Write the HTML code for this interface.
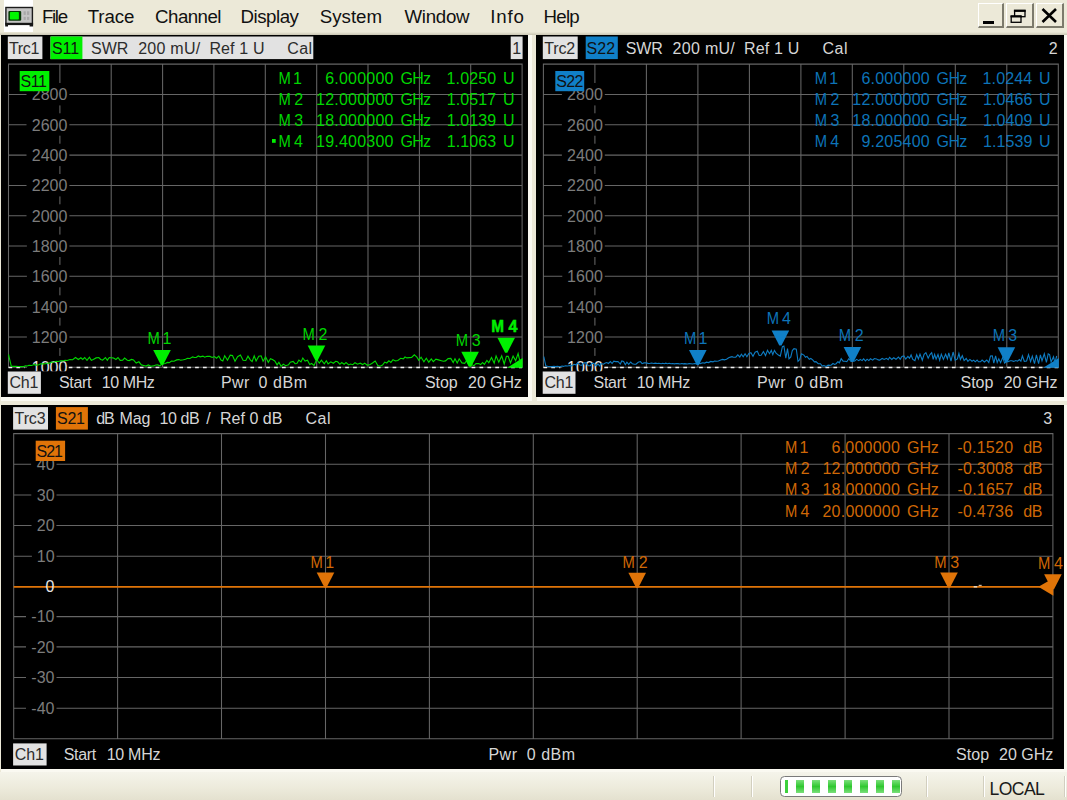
<!DOCTYPE html>
<html><head><meta charset="utf-8"><title>VNA</title>
<style>
html,body{margin:0;padding:0;}
body{width:1067px;height:800px;overflow:hidden;background:#ece9d8;font-family:"Liberation Sans",sans-serif;position:relative;}
.abs{position:absolute;}
.panel{position:absolute;background:#000;overflow:hidden;}
svg{position:absolute;left:0;top:0;}
svg text{font-family:"Liberation Sans",sans-serif;font-size:16px;white-space:pre;}
.btn{position:absolute;top:3px;height:25px;background:#ece9d8;border-top:1px solid #fff;border-left:1px solid #fff;border-right:2px solid #7c7a6c;border-bottom:2px solid #7c7a6c;box-sizing:border-box;}
</style></head><body>

<div class="abs" style="left:0;top:0;width:1067px;height:34px;">
<div class="abs" style="left:4.4px;top:0;width:29px;height:31.5px;background:#fff;"></div>
<div class="abs" style="left:0;top:31.5px;width:1067px;height:3px;background:linear-gradient(#ece9d8,#c9c5b2);"></div>
<svg width="1067" height="34" viewBox="0 0 1067 34">
<rect x="5.9" y="7.5" width="26.5" height="16.2" fill="#c4c4c4" stroke="#1c1c1c" stroke-width="1.4"/>
<rect x="8.4" y="10.9" width="12.8" height="9.8" rx="1.2" fill="#063806"/>
<rect x="9.9" y="12" width="9" height="7.6" rx="0.8" fill="#00f800"/>
<rect x="23.6" y="11.3" width="2.2" height="3.6" fill="#a8a8a8"/><rect x="27" y="11.3" width="2.3" height="3.6" fill="#a8a8a8"/>
<rect x="23.6" y="16.9" width="2.2" height="3" fill="#a8a8a8"/><rect x="27" y="16.9" width="2.3" height="3" fill="#a8a8a8"/>
<rect x="5.2" y="22.8" width="27.9" height="2.3" fill="#161616"/>
<rect x="5.2" y="24.5" width="2.8" height="2" fill="#161616"/><rect x="29.6" y="24.5" width="3.5" height="2" fill="#161616"/>
<text x="41.9" y="22.8" fill="#111" style="font-size:18.7px" letter-spacing="-1.32">File</text>
<text x="87.7" y="22.8" fill="#111" style="font-size:18.7px" letter-spacing="-0.08">Trace</text>
<text x="155.1" y="22.8" fill="#111" style="font-size:18.7px" letter-spacing="-0.55">Channel</text>
<text x="240.5" y="22.8" fill="#111" style="font-size:18.7px" letter-spacing="-0.47">Display</text>
<text x="319.7" y="22.8" fill="#111" style="font-size:18.7px" letter-spacing="0.02">System</text>
<text x="404.5" y="22.8" fill="#111" style="font-size:18.7px" letter-spacing="-0.29">Window</text>
<text x="490.2" y="22.8" fill="#111" style="font-size:18.7px" letter-spacing="0.83">Info</text>
<text x="543.4" y="22.8" fill="#111" style="font-size:18.7px" letter-spacing="-0.69">Help</text>
</svg>
<div class="btn" style="left:978px;width:26px;"><div class="abs" style="left:4px;top:17px;width:11px;height:3px;background:#000"></div></div>
<div class="btn" style="left:1005.5px;width:28px;"><svg width="28" height="25"><rect x="7.6" y="6.9" width="10.4" height="5.8" fill="none" stroke="#000" stroke-width="1.3"/><rect x="6.9" y="5.6" width="11.8" height="2.2" fill="#000"/><rect x="4.2" y="12.5" width="9.8" height="5.8" fill="#ece9d8" stroke="#000" stroke-width="1.3"/><rect x="3.5" y="11.2" width="11.2" height="2.2" fill="#000"/></svg></div>
<div class="btn" style="left:1036px;width:27.5px;"><svg width="28" height="25"><path d="M5.5 5 L19 18 M19 5 L5.5 18" stroke="#000" stroke-width="2.6" fill="none"/></svg></div>
</div>
<div class="panel" style="left:1px;top:35px;width:527px;height:362px;">
<svg width="527" height="362" viewBox="1.3 34.5 527 362">
<path d="M8.8 63.1V367.3M60.2 63.1V367.3M111.5 63.1V367.3M162.9 63.1V367.3M214.2 63.1V367.3M265.6 63.1V367.3M317.0 63.1V367.3M368.3 63.1V367.3M419.7 63.1V367.3M471.0 63.1V367.3M522.4 63.1V367.3M8.3 63.6H522.9M8.3 93.9H522.9M8.3 124.2H522.9M8.3 154.6H522.9M8.3 184.9H522.9M8.3 215.2H522.9M8.3 245.5H522.9M8.3 275.8H522.9M8.3 306.2H522.9M8.3 336.5H522.9M8.3 366.8H522.9" stroke="#666666" stroke-width="1.05" fill="none"/>
<svg x="8.8" y="63.6" width="513.6" height="307.2" viewBox="8.8 63.6 513.6 307.2" overflow="hidden">
<rect x="26.8" y="82.5" width="42.9" height="22.4" fill="#000"/>
<text x="32.0" y="99.7" fill="#7c7c7c" letter-spacing="0.05">2800</text>
<rect x="26.8" y="112.8" width="42.9" height="22.4" fill="#000"/>
<text x="32.0" y="130.0" fill="#7c7c7c" letter-spacing="0.05">2600</text>
<rect x="26.8" y="143.2" width="42.9" height="22.4" fill="#000"/>
<text x="32.0" y="160.4" fill="#7c7c7c" letter-spacing="0.05">2400</text>
<rect x="26.8" y="173.5" width="42.9" height="22.4" fill="#000"/>
<text x="32.0" y="190.7" fill="#7c7c7c" letter-spacing="0.05">2200</text>
<rect x="26.8" y="203.8" width="42.9" height="22.4" fill="#000"/>
<text x="32.0" y="221.0" fill="#7c7c7c" letter-spacing="0.05">2000</text>
<rect x="27.2" y="234.1" width="42.5" height="22.4" fill="#000"/>
<text x="32.0" y="251.3" fill="#7c7c7c" letter-spacing="0.05">1800</text>
<rect x="27.2" y="264.4" width="42.5" height="22.4" fill="#000"/>
<text x="32.0" y="281.6" fill="#7c7c7c" letter-spacing="0.05">1600</text>
<rect x="27.2" y="294.8" width="42.5" height="22.4" fill="#000"/>
<text x="32.0" y="312.0" fill="#7c7c7c" letter-spacing="0.05">1400</text>
<rect x="27.2" y="325.1" width="42.5" height="22.4" fill="#000"/>
<text x="32.0" y="342.3" fill="#7c7c7c" letter-spacing="0.05">1200</text>
<rect x="27.2" y="355.4" width="42.5" height="22.4" fill="#000"/>
<text x="32.0" y="372.6" fill="#e2e2e2" letter-spacing="0.05">1000</text>
</svg>
<line x1="69" y1="367" x2="522.4" y2="367" stroke="#f0f0f0" stroke-width="1.5" stroke-dasharray="3.7,4.2"/>
<line x1="8.8" y1="367" x2="25" y2="367" stroke="#f0f0f0" stroke-width="1.5" stroke-dasharray="3.7,4.2"/>
<polygon points="522.9,367.3 522.9,357.6 507.4,367.3" fill="#00f000"/>
<rect x="8.1" y="36.0" width="34.6" height="22.6" fill="#e2e2e2"/>
<text x="9.3" y="53.0" fill="#2c2c2c" letter-spacing="-0.37">Trc1</text>
<rect x="50.8" y="36.0" width="262.8" height="22.6" fill="#e2e2e2"/>
<rect x="50.8" y="36.0" width="31.9" height="22.6" fill="#00f000"/>
<text x="52.2" y="53.0" fill="#111" letter-spacing="-0.02">S11</text>
<text x="91.4" y="53.0" fill="#2c2c2c" letter-spacing="-0.11">SWR</text>
<text x="138.5" y="53.0" fill="#2c2c2c" letter-spacing="0.25">200 mU/</text>
<text x="209.7" y="53.0" fill="#2c2c2c" letter-spacing="0.14">Ref 1 U</text>
<text x="287.5" y="53.0" fill="#2c2c2c" letter-spacing="0.38">Cal</text>
<rect x="511.0" y="36.0" width="11.9" height="22.6" fill="#e2e2e2"/>
<text x="512.6" y="53.0" fill="#2c2c2c">1</text>
<rect x="20.0" y="70.5" width="29.6" height="20.2" fill="#00f000"/>
<text x="20.7" y="86.6" fill="#111" letter-spacing="-0.37">S11</text>
<text x="278.9" y="83.0" fill="#00d600" textLength="12.3" lengthAdjust="spacingAndGlyphs">M</text>
<text x="293.3" y="83.0" fill="#00d600">1</text>
<text x="325.5" y="83.0" fill="#00d600" letter-spacing="0.22">6.000000</text>
<text x="400.7" y="83.0" fill="#00d600" letter-spacing="-0.64">GHz</text>
<text x="446.9" y="83.0" fill="#00d600" letter-spacing="0.10">1.0250</text>
<text x="503.2" y="83.0" fill="#00d600">U</text>
<text x="278.9" y="104.1" fill="#00d600" textLength="12.3" lengthAdjust="spacingAndGlyphs">M</text>
<text x="294.6" y="104.1" fill="#00d600">2</text>
<text x="316.4" y="104.1" fill="#00d600" letter-spacing="0.22">12.000000</text>
<text x="400.7" y="104.1" fill="#00d600" letter-spacing="-0.64">GHz</text>
<text x="447.1" y="104.1" fill="#00d600" letter-spacing="0.10">1.0517</text>
<text x="503.2" y="104.1" fill="#00d600">U</text>
<text x="278.9" y="125.2" fill="#00d600" textLength="12.3" lengthAdjust="spacingAndGlyphs">M</text>
<text x="294.6" y="125.2" fill="#00d600">3</text>
<text x="316.4" y="125.2" fill="#00d600" letter-spacing="0.22">18.000000</text>
<text x="400.7" y="125.2" fill="#00d600" letter-spacing="-0.64">GHz</text>
<text x="447.1" y="125.2" fill="#00d600" letter-spacing="0.10">1.0139</text>
<text x="503.2" y="125.2" fill="#00d600">U</text>
<text x="278.9" y="146.3" fill="#00d600" textLength="12.3" lengthAdjust="spacingAndGlyphs">M</text>
<text x="294.3" y="146.3" fill="#00d600">4</text>
<text x="316.4" y="146.3" fill="#00d600" letter-spacing="0.22">19.400300</text>
<text x="400.7" y="146.3" fill="#00d600" letter-spacing="-0.64">GHz</text>
<text x="447.0" y="146.3" fill="#00d600" letter-spacing="0.10">1.1063</text>
<text x="503.2" y="146.3" fill="#00d600">U</text>
<rect x="272.3" y="138.5" width="3.7" height="3.8" fill="#00f000"/>
<polyline points="8.8,354.0 11.6,365.8 14.0,365.9 16.4,365.8 18.5,366.0 21.0,366.1 23.9,366.0 25.8,365.4 27.6,365.5 29.3,364.8 32.0,365.0 34.3,364.1 36.4,364.6 39.1,364.2 41.0,363.2 43.7,363.4 45.8,363.2 47.5,362.7 49.8,362.6 51.6,361.5 53.7,361.7 56.5,360.8 58.5,361.0 61.1,360.3 63.4,360.4 65.3,359.8 67.5,360.0 70.3,359.1 73.0,359.2 75.8,357.0 78.6,359.0 81.2,357.3 83.0,358.9 85.0,357.0 87.3,359.8 89.7,356.7 91.6,359.8 93.6,359.0 96.4,357.4 99.1,357.0 101.0,358.9 103.0,359.6 105.7,357.0 107.6,359.7 109.6,357.0 112.0,357.3 114.0,357.6 116.2,359.0 118.3,357.0 120.5,359.9 123.0,359.7 124.9,357.6 127.6,359.7 129.4,360.1 131.9,358.9 133.8,359.4 136.5,362.6 139.2,361.3 141.7,364.4 143.9,365.0 146.3,365.6 148.6,364.4 151.1,365.8 153.7,365.4 156.1,364.5 157.9,364.4 160.3,365.3 162.8,363.4 165.6,363.0 167.7,361.9 169.6,362.1 171.8,360.6 174.3,360.7 177.0,359.4 179.1,359.1 181.0,359.7 183.7,359.3 185.8,358.7 187.8,357.7 190.3,358.0 192.9,356.4 194.8,357.0 196.5,357.0 198.6,355.5 200.5,356.3 203.2,355.6 205.0,356.7 207.4,355.7 210.2,355.9 212.5,357.0 214.8,356.1 216.8,357.7 219.1,355.6 221.3,359.6 223.1,360.5 225.0,355.3 227.8,359.7 230.5,354.7 232.8,355.1 235.3,360.8 237.9,356.2 240.7,354.6 243.4,359.8 246.1,360.0 248.3,355.7 250.6,359.4 252.4,361.1 254.5,355.4 256.4,360.5 259.1,355.8 261.4,355.3 263.4,360.7 265.9,356.5 268.6,361.8 270.8,358.2 272.7,359.1 275.1,360.5 277.4,364.4 279.2,361.8 281.4,365.8 283.6,363.6 286.0,365.2 288.8,364.3 290.6,361.7 293.4,360.9 295.4,363.2 297.2,363.0 299.2,359.5 301.3,361.4 303.1,357.5 305.4,360.6 307.8,359.7 310.0,364.0 311.9,363.0 314.3,364.9 317.0,359.0 319.6,362.6 321.7,359.7 324.6,363.3 326.6,360.3 328.4,363.4 331.1,361.3 333.6,362.8 336.1,360.8 337.9,361.3 340.2,363.8 342.0,362.0 344.4,363.8 346.3,362.1 349.0,364.4 350.8,363.5 353.1,364.2 355.3,362.2 357.8,363.7 360.5,362.7 363.0,364.1 364.9,362.6 367.7,364.8 370.4,363.9 372.8,362.5 375.5,360.5 378.1,365.0 380.3,365.7 382.8,364.5 385.0,361.6 387.1,362.5 389.2,360.3 391.2,361.9 393.3,359.2 395.7,360.4 398.1,360.0 401.0,357.8 403.6,358.3 405.3,356.5 407.2,357.4 409.5,357.1 411.9,357.0 414.6,354.3 417.2,356.6 419.1,359.8 421.4,356.7 424.2,361.2 426.6,357.7 429.1,361.7 431.6,358.4 433.6,361.1 436.2,358.6 438.8,359.4 441.6,360.2 443.8,360.8 445.8,360.4 448.4,358.1 451.1,357.9 453.5,362.1 455.3,358.2 457.5,362.5 459.5,358.3 462.2,362.4 465.0,362.8 466.8,360.2 469.3,365.0 471.8,364.1 474.3,365.2 476.3,363.0 479.0,363.1 481.0,364.1 482.9,362.0 484.7,363.8 487.2,360.0 489.1,362.2 491.8,356.9 494.5,362.7 496.4,355.4 499.1,361.7 502.0,355.4 504.5,363.5 506.7,355.9 508.5,355.9 510.8,362.5 513.4,355.6 515.9,360.1 518.4,353.0 520.3,361.1" fill="none" stroke="#00d800" stroke-width="1.1" stroke-linejoin="miter"/>
<polygon points="153.5,349.6 171.1,349.6 163.4,364.6 161.2,364.6" fill="#00f000"/>
<text x="147.7" y="343.0" fill="#00d600" textLength="12.3" lengthAdjust="spacingAndGlyphs">M</text>
<text x="162.8" y="343.0" fill="#00d600">1</text>
<!-- M 1 -->
<polygon points="308.0,345.0 325.6,345.0 317.9,360.0 315.7,360.0" fill="#00f000"/>
<text x="302.8" y="339.7" fill="#00d600" textLength="12.3" lengthAdjust="spacingAndGlyphs">M</text>
<text x="318.8" y="339.7" fill="#00d600">2</text>
<!-- M 2 -->
<polygon points="461.6,351.3 479.2,351.3 471.5,366.3 469.3,366.3" fill="#00f000"/>
<text x="456.0" y="345.0" fill="#00d600" textLength="12.3" lengthAdjust="spacingAndGlyphs">M</text>
<text x="472.0" y="345.0" fill="#00d600">3</text>
<!-- M 3 -->
<polygon points="497.7,337.2 515.3,337.2 507.6,352.2 505.4,352.2" fill="#00f000"/>
<text x="491.6" y="331.8" fill="#00f000" font-weight="bold" stroke="#00f000" stroke-width="0.5" textLength="12.7" lengthAdjust="spacingAndGlyphs">M</text>
<text x="508.9" y="331.8" fill="#00f000" font-weight="bold" stroke="#00f000" stroke-width="0.5">4</text>
<!-- M 4 -->
<rect x="8.1" y="371.0" width="33.1" height="22.3" fill="#e2e2e2"/>
<text x="9.8" y="387.6" fill="#2c2c2c" letter-spacing="-0.22">Ch1</text>
<text x="59.3" y="387.6" fill="#d6d6d6" letter-spacing="-0.36">Start</text>
<text x="102.0" y="387.6" fill="#d6d6d6" letter-spacing="-0.40">10 MHz</text>
<text x="221.2" y="387.6" fill="#d6d6d6" letter-spacing="0.46">Pwr</text>
<text x="258.9" y="387.6" fill="#d6d6d6" letter-spacing="0.56">0 dBm</text>
<text x="425.3" y="387.6" fill="#d6d6d6" letter-spacing="-0.07">Stop</text>
<text x="468.4" y="387.6" fill="#d6d6d6" letter-spacing="-0.10">20 GHz</text>
</svg></div>
<div class="panel" style="left:536px;top:35px;width:528px;height:362px;">
<svg width="528" height="362" viewBox="536.1 34.5 528 362">
<path d="M543.5 63.1V367.3M595.0 63.1V367.3M646.5 63.1V367.3M698.0 63.1V367.3M749.5 63.1V367.3M801.0 63.1V367.3M852.4 63.1V367.3M903.9 63.1V367.3M955.4 63.1V367.3M1006.9 63.1V367.3M1058.4 63.1V367.3M543.0 63.6H1058.9M543.0 93.9H1058.9M543.0 124.2H1058.9M543.0 154.6H1058.9M543.0 184.9H1058.9M543.0 215.2H1058.9M543.0 245.5H1058.9M543.0 275.8H1058.9M543.0 306.2H1058.9M543.0 336.5H1058.9M543.0 366.8H1058.9" stroke="#666666" stroke-width="1.05" fill="none"/>
<svg x="543.5" y="63.6" width="514.9" height="307.2" viewBox="543.5 63.6 514.9 307.2" overflow="hidden">
<rect x="562.0" y="82.5" width="42.9" height="22.4" fill="#000"/>
<text x="567.2" y="99.7" fill="#7c7c7c" letter-spacing="0.05">2800</text>
<rect x="562.0" y="112.8" width="42.9" height="22.4" fill="#000"/>
<text x="567.2" y="130.0" fill="#7c7c7c" letter-spacing="0.05">2600</text>
<rect x="562.0" y="143.2" width="42.9" height="22.4" fill="#000"/>
<text x="567.2" y="160.4" fill="#7c7c7c" letter-spacing="0.05">2400</text>
<rect x="562.0" y="173.5" width="42.9" height="22.4" fill="#000"/>
<text x="567.2" y="190.7" fill="#7c7c7c" letter-spacing="0.05">2200</text>
<rect x="562.0" y="203.8" width="42.9" height="22.4" fill="#000"/>
<text x="567.2" y="221.0" fill="#7c7c7c" letter-spacing="0.05">2000</text>
<rect x="562.4" y="234.1" width="42.5" height="22.4" fill="#000"/>
<text x="567.2" y="251.3" fill="#7c7c7c" letter-spacing="0.05">1800</text>
<rect x="562.4" y="264.4" width="42.5" height="22.4" fill="#000"/>
<text x="567.2" y="281.6" fill="#7c7c7c" letter-spacing="0.05">1600</text>
<rect x="562.4" y="294.8" width="42.5" height="22.4" fill="#000"/>
<text x="567.2" y="312.0" fill="#7c7c7c" letter-spacing="0.05">1400</text>
<rect x="562.4" y="325.1" width="42.5" height="22.4" fill="#000"/>
<text x="567.2" y="342.3" fill="#7c7c7c" letter-spacing="0.05">1200</text>
<rect x="562.4" y="355.4" width="42.5" height="22.4" fill="#000"/>
<text x="567.2" y="372.6" fill="#e2e2e2" letter-spacing="0.05">1000</text>
</svg>
<line x1="604.4" y1="367" x2="1058.4" y2="367" stroke="#f0f0f0" stroke-width="1.5" stroke-dasharray="3.7,4.2"/>
<line x1="543.5" y1="367" x2="560.4" y2="367" stroke="#f0f0f0" stroke-width="1.5" stroke-dasharray="3.7,4.2"/>
<polygon points="1058.9,367.3 1058.9,357.6 1043.4,367.3" fill="#1080c8"/>
<rect x="542.9" y="36.0" width="34.9" height="22.6" fill="#e2e2e2"/>
<text x="544.3" y="53.0" fill="#2c2c2c" letter-spacing="-0.14">Trc2</text>
<rect x="585.8" y="36.0" width="32.1" height="22.6" fill="#1080c8"/>
<text x="586.7" y="53.0" fill="#111" letter-spacing="0.03">S22</text>
<text x="625.9" y="53.0" fill="#d6d6d6" letter-spacing="-0.11">SWR</text>
<text x="672.7" y="53.0" fill="#d6d6d6" letter-spacing="0.29">200 mU/</text>
<text x="744.1" y="53.0" fill="#d6d6d6" letter-spacing="0.17">Ref 1 U</text>
<text x="822.6" y="53.0" fill="#d6d6d6" letter-spacing="0.48">Cal</text>
<text x="1048.9" y="53.0" fill="#d6d6d6">2</text>
<rect x="555.4" y="70.5" width="28.9" height="20.2" fill="#1080c8"/>
<text x="556.3" y="86.6" fill="#111" letter-spacing="-0.67">S22</text>
<text x="814.9" y="83.0" fill="#0d74b8" textLength="12.3" lengthAdjust="spacingAndGlyphs">M</text>
<text x="829.3" y="83.0" fill="#0d74b8">1</text>
<text x="861.5" y="83.0" fill="#0d74b8" letter-spacing="0.22">6.000000</text>
<text x="936.7" y="83.0" fill="#0d74b8" letter-spacing="-0.64">GHz</text>
<text x="982.7" y="83.0" fill="#0d74b8" letter-spacing="0.10">1.0244</text>
<text x="1039.2" y="83.0" fill="#0d74b8">U</text>
<text x="814.9" y="104.1" fill="#0d74b8" textLength="12.3" lengthAdjust="spacingAndGlyphs">M</text>
<text x="830.6" y="104.1" fill="#0d74b8">2</text>
<text x="852.4" y="104.1" fill="#0d74b8" letter-spacing="0.22">12.000000</text>
<text x="936.7" y="104.1" fill="#0d74b8" letter-spacing="-0.64">GHz</text>
<text x="983.0" y="104.1" fill="#0d74b8" letter-spacing="0.10">1.0466</text>
<text x="1039.2" y="104.1" fill="#0d74b8">U</text>
<text x="814.9" y="125.2" fill="#0d74b8" textLength="12.3" lengthAdjust="spacingAndGlyphs">M</text>
<text x="830.6" y="125.2" fill="#0d74b8">3</text>
<text x="852.4" y="125.2" fill="#0d74b8" letter-spacing="0.22">18.000000</text>
<text x="936.7" y="125.2" fill="#0d74b8" letter-spacing="-0.64">GHz</text>
<text x="983.1" y="125.2" fill="#0d74b8" letter-spacing="0.10">1.0409</text>
<text x="1039.2" y="125.2" fill="#0d74b8">U</text>
<text x="814.9" y="146.3" fill="#0d74b8" textLength="12.3" lengthAdjust="spacingAndGlyphs">M</text>
<text x="830.3" y="146.3" fill="#0d74b8">4</text>
<text x="861.5" y="146.3" fill="#0d74b8" letter-spacing="0.22">9.205400</text>
<text x="936.7" y="146.3" fill="#0d74b8" letter-spacing="-0.64">GHz</text>
<text x="983.1" y="146.3" fill="#0d74b8" letter-spacing="0.10">1.1539</text>
<text x="1039.2" y="146.3" fill="#0d74b8">U</text>
<polyline points="543.9,356.0 545.9,365.4 548.2,366.0 549.9,366.0 552.2,366.1 554.0,365.9 555.8,366.1 557.7,365.8 559.9,366.2 562.1,365.5 563.5,365.9 565.5,365.2 567.7,365.5 569.9,365.0 572.0,365.4 574.0,363.8 576.0,364.3 578.2,362.5 580.0,364.5 582.1,364.7 584.2,362.4 586.0,362.4 588.2,365.1 590.5,365.2 592.4,362.7 594.2,363.0 596.4,365.3 598.0,363.3 599.7,365.4 601.4,363.2 603.5,363.7 605.4,362.5 606.9,362.0 608.5,363.0 610.5,361.1 612.2,363.0 613.9,360.7 615.8,361.1 618.1,361.0 620.4,363.5 621.9,360.4 623.7,360.9 625.4,364.2 627.0,361.6 628.8,363.9 630.8,361.5 632.5,363.3 634.4,363.8 636.1,363.7 638.3,361.8 640.5,361.1 642.2,363.2 644.1,362.4 646.0,362.4 648.2,362.9 649.7,363.0 651.7,362.5 653.9,363.0 655.4,362.6 657.5,363.0 659.0,362.7 661.3,363.2 662.8,362.8 664.4,363.2 665.9,362.7 667.5,363.2 669.3,362.8 671.0,363.3 672.7,363.0 674.4,363.4 676.5,363.0 678.1,363.1 680.1,363.5 681.9,363.0 683.4,363.4 685.0,363.1 687.3,363.5 689.3,363.1 691.1,363.2 692.6,363.5 694.9,363.0 696.9,363.4 698.7,362.8 700.4,363.1 702.7,362.2 704.8,362.6 706.6,361.7 708.7,362.1 710.8,360.9 713.1,361.4 714.6,360.5 716.7,360.8 718.5,360.5 720.8,359.6 722.7,358.9 724.4,359.4 726.6,358.8 728.8,357.3 730.5,356.6 732.1,356.2 733.5,356.8 735.9,356.6 737.9,354.4 739.9,356.5 741.5,353.7 743.3,356.3 745.2,353.2 747.0,356.2 749.0,353.0 751.0,352.2 753.1,355.8 755.2,351.7 757.4,350.8 759.3,355.0 761.2,354.8 763.5,351.1 765.6,355.1 767.6,349.8 769.6,353.2 771.4,349.9 772.9,354.1 774.5,349.9 776.2,352.6 778.5,354.6 780.4,355.6 782.5,346.2 784.0,345.5 785.9,357.7 787.6,348.1 789.1,358.3 790.9,356.4 792.4,350.1 794.1,348.2 796.4,348.7 798.1,360.9 799.7,359.3 801.6,353.2 804.0,354.6 805.6,356.8 807.1,355.9 809.4,358.8 810.9,358.0 812.8,359.4 814.5,361.4 816.1,361.1 818.3,363.2 820.6,363.2 822.3,365.5 824.0,365.0 826.3,366.0 828.2,364.6 829.9,364.9 831.4,364.5 833.1,363.0 834.7,363.9 836.2,363.2 838.0,361.2 839.5,362.3 841.3,358.2 843.2,360.7 845.3,360.7 846.9,361.2 848.9,358.1 851.1,361.0 852.7,359.3 854.7,360.6 856.7,358.9 858.9,360.2 860.4,358.9 862.2,360.1 863.7,358.4 865.6,360.4 867.2,358.7 868.9,360.1 870.6,358.3 872.8,359.6 874.4,358.0 876.6,358.4 878.3,359.4 879.8,359.6 882.2,358.0 884.3,359.0 886.6,357.8 888.3,359.2 889.7,356.8 891.9,358.9 893.8,357.3 896.1,358.8 898.5,356.5 900.3,358.7 902.0,356.0 904.0,355.5 905.8,358.5 908.0,355.8 909.6,357.8 911.2,354.5 912.9,358.9 915.0,360.1 916.8,354.2 918.5,358.4 920.1,353.6 922.4,359.7 924.2,353.9 926.0,352.1 928.3,357.7 930.1,354.1 931.8,352.1 933.3,358.8 934.7,353.9 936.2,358.6 938.1,354.0 939.8,359.8 941.4,353.7 943.5,358.9 945.7,353.7 947.5,358.3 948.9,352.4 951.1,360.7 953.2,351.5 955.3,359.7 957.5,358.4 959.0,353.0 960.5,359.0 962.4,355.2 964.2,360.1 966.3,358.0 968.0,360.9 970.0,358.9 972.1,360.7 973.8,359.6 975.3,361.3 977.2,359.5 978.6,361.3 980.6,361.3 982.2,359.6 984.5,361.5 986.9,359.5 988.9,362.0 990.6,355.5 992.4,355.4 993.9,362.7 995.7,355.3 997.3,362.0 998.9,358.3 1000.7,362.2 1002.8,356.8 1004.7,362.7 1006.5,361.3 1008.2,361.3 1010.3,360.3 1011.8,360.3 1013.8,360.9 1015.9,360.1 1017.6,360.7 1019.5,359.1 1021.0,360.6 1022.5,355.3 1024.4,360.8 1026.7,360.5 1028.6,354.1 1030.7,361.1 1032.4,355.6 1034.6,363.1 1036.5,354.3 1038.7,363.1 1040.5,354.4 1042.1,360.4 1044.4,353.3 1046.5,361.8 1048.3,353.4 1049.7,354.1 1051.2,361.4 1053.6,356.2 1055.0,362.3 1056.8,355.5" fill="none" stroke="#0e7cc2" stroke-width="1.1" stroke-linejoin="miter"/>
<polygon points="689.1,349.6 706.7,349.6 699.0,364.6 696.8,364.6" fill="#1080c8"/>
<text x="684.2" y="343.0" fill="#0d74b8" textLength="12.3" lengthAdjust="spacingAndGlyphs">M</text>
<text x="698.7" y="343.0" fill="#0d74b8">1</text>
<!-- M 1 -->
<polygon points="771.7,330.0 789.3,330.0 781.6,345.0 779.4,345.0" fill="#1080c8"/>
<text x="766.8" y="323.0" fill="#0d74b8" textLength="12.3" lengthAdjust="spacingAndGlyphs">M</text>
<text x="782.0" y="323.0" fill="#0d74b8">4</text>
<!-- M 4 -->
<polygon points="843.7,346.6 861.3,346.6 853.6,361.6 851.4,361.6" fill="#1080c8"/>
<text x="838.8" y="340.8" fill="#0d74b8" textLength="12.3" lengthAdjust="spacingAndGlyphs">M</text>
<text x="854.8" y="340.8" fill="#0d74b8">2</text>
<!-- M 2 -->
<polygon points="997.7,346.8 1015.3,346.8 1007.6,361.8 1005.4,361.8" fill="#1080c8"/>
<text x="992.8" y="340.8" fill="#0d74b8" textLength="12.3" lengthAdjust="spacingAndGlyphs">M</text>
<text x="1008.3" y="340.8" fill="#0d74b8">3</text>
<!-- M 3 -->
<rect x="542.8" y="371.0" width="32.8" height="22.3" fill="#e2e2e2"/>
<text x="544.5" y="387.6" fill="#2c2c2c" letter-spacing="-0.22">Ch1</text>
<text x="593.6" y="387.6" fill="#d6d6d6" letter-spacing="-0.28">Start</text>
<text x="636.8" y="387.6" fill="#d6d6d6" letter-spacing="-0.32">10 MHz</text>
<text x="757.2" y="387.6" fill="#d6d6d6" letter-spacing="0.46">Pwr</text>
<text x="794.9" y="387.6" fill="#d6d6d6" letter-spacing="0.54">0 dBm</text>
<text x="960.7" y="387.6" fill="#d6d6d6" letter-spacing="-0.07">Stop</text>
<text x="1003.8" y="387.6" fill="#d6d6d6" letter-spacing="-0.10">20 GHz</text>
</svg></div>
<div class="panel" style="left:1px;top:405px;width:1063px;height:364px;">
<svg width="1063" height="364" viewBox="1.3 405.4 1063 364">
<path d="M14.0 433.5V739.7M117.9 433.5V739.7M221.8 433.5V739.7M325.8 433.5V739.7M429.7 433.5V739.7M533.6 433.5V739.7M637.5 433.5V739.7M741.4 433.5V739.7M845.4 433.5V739.7M949.3 433.5V739.7M1053.2 433.5V739.7M13.5 434.0H1053.7M13.5 464.6H1053.7M13.5 495.3H1053.7M13.5 525.9H1053.7M13.5 556.6H1053.7M13.5 617.0H1053.7M13.5 647.3H1053.7M13.5 677.9H1053.7M13.5 708.6H1053.7M13.5 739.2H1053.7" stroke="#666666" stroke-width="1.05" fill="none"/>
<svg x="14" y="434" width="1039.2" height="305.8" viewBox="14 434 1039.2 305.8" overflow="hidden">
<rect x="31.4" y="453.2" width="25.4" height="22.4" fill="#000"/>
<text x="37.0" y="470.4" fill="#7c7c7c" letter-spacing="0.05">40</text>
<rect x="31.6" y="483.9" width="25.2" height="22.4" fill="#000"/>
<text x="37.0" y="501.1" fill="#7c7c7c" letter-spacing="0.05">30</text>
<rect x="31.8" y="514.5" width="24.9" height="22.4" fill="#000"/>
<text x="37.0" y="531.7" fill="#7c7c7c" letter-spacing="0.05">20</text>
<rect x="32.2" y="545.2" width="24.6" height="22.4" fill="#000"/>
<text x="37.0" y="562.4" fill="#7c7c7c" letter-spacing="0.05">10</text>
<rect x="26.3" y="605.6" width="30.5" height="22.4" fill="#000"/>
<text x="31.6" y="622.8" fill="#7c7c7c" letter-spacing="0.05">-10</text>
<rect x="26.3" y="635.9" width="30.5" height="22.4" fill="#000"/>
<text x="31.6" y="653.1" fill="#7c7c7c" letter-spacing="0.05">-20</text>
<rect x="26.3" y="666.5" width="30.5" height="22.4" fill="#000"/>
<text x="31.6" y="683.7" fill="#7c7c7c" letter-spacing="0.05">-30</text>
<rect x="26.3" y="697.2" width="30.5" height="22.4" fill="#000"/>
<text x="31.6" y="714.4" fill="#7c7c7c" letter-spacing="0.05">-40</text>
</svg>
<rect x="13.4" y="407.5" width="34.9" height="22.5" fill="#e2e2e2"/>
<text x="14.9" y="424.6" fill="#2c2c2c" letter-spacing="-0.13">Trc3</text>
<rect x="56.2" y="407.5" width="32.0" height="22.5" fill="#e07408"/>
<text x="57.4" y="424.6" fill="#111" letter-spacing="-0.32">S21</text>
<text x="96.6" y="424.6" fill="#d6d6d6" letter-spacing="-1.28">dB</text>
<text x="119.7" y="424.6" fill="#d6d6d6" letter-spacing="-0.04">Mag</text>
<text x="159.8" y="424.6" fill="#d6d6d6" letter-spacing="-0.39">10 dB</text>
<text x="206.5" y="424.6" fill="#d6d6d6">/</text>
<text x="220.2" y="424.6" fill="#d6d6d6" letter-spacing="0.05">Ref 0 dB</text>
<text x="305.8" y="424.6" fill="#d6d6d6" letter-spacing="0.48">Cal</text>
<text x="1043.6" y="424.6" fill="#d6d6d6">3</text>
<rect x="36.0" y="441.1" width="29.4" height="20.3" fill="#e07408"/>
<text x="36.9" y="457.3" fill="#111" letter-spacing="-1.02">S21</text>
<text x="785.3" y="453.4" fill="#d06806" textLength="12.3" lengthAdjust="spacingAndGlyphs">M</text>
<text x="799.8" y="453.4" fill="#d06806">1</text>
<text x="831.9" y="453.4" fill="#d06806" letter-spacing="0.22">6.000000</text>
<text x="907.4" y="453.4" fill="#d06806" letter-spacing="-0.14">GHz</text>
<text x="957.6" y="453.4" fill="#d06806" letter-spacing="0.25">-0.1520</text>
<text x="1023.5" y="453.4" fill="#d06806" letter-spacing="-0.28">dB</text>
<text x="785.3" y="474.6" fill="#d06806" textLength="12.3" lengthAdjust="spacingAndGlyphs">M</text>
<text x="801.0" y="474.6" fill="#d06806">2</text>
<text x="822.8" y="474.6" fill="#d06806" letter-spacing="0.22">12.000000</text>
<text x="907.4" y="474.6" fill="#d06806" letter-spacing="-0.14">GHz</text>
<text x="957.7" y="474.6" fill="#d06806" letter-spacing="0.25">-0.3008</text>
<text x="1023.5" y="474.6" fill="#d06806" letter-spacing="-0.28">dB</text>
<text x="785.3" y="495.8" fill="#d06806" textLength="12.3" lengthAdjust="spacingAndGlyphs">M</text>
<text x="801.0" y="495.8" fill="#d06806">3</text>
<text x="822.8" y="495.8" fill="#d06806" letter-spacing="0.22">18.000000</text>
<text x="907.4" y="495.8" fill="#d06806" letter-spacing="-0.14">GHz</text>
<text x="957.8" y="495.8" fill="#d06806" letter-spacing="0.25">-0.1657</text>
<text x="1023.5" y="495.8" fill="#d06806" letter-spacing="-0.28">dB</text>
<text x="785.3" y="517.0" fill="#d06806" textLength="12.3" lengthAdjust="spacingAndGlyphs">M</text>
<text x="800.7" y="517.0" fill="#d06806">4</text>
<text x="822.8" y="517.0" fill="#d06806" letter-spacing="0.22">20.000000</text>
<text x="907.4" y="517.0" fill="#d06806" letter-spacing="-0.14">GHz</text>
<text x="957.7" y="517.0" fill="#d06806" letter-spacing="0.25">-0.4736</text>
<text x="1023.5" y="517.0" fill="#d06806" letter-spacing="-0.28">dB</text>
<polyline points="14,587.25 1053.2,587.25" fill="none" stroke="#e07408" stroke-width="1.6"/>
<text x="45.7" y="592.9" fill="#e6e6e6">0</text>
<polygon points="1053.7,578.6 1053.7,596.1 1038.7,587.1" fill="#e07408"/>
<path d="M974 587.2h3.5" stroke="#e8e0d0" stroke-width="1.4"/><path d="M979 585.8h3" stroke="#c8b8a0" stroke-width="1.2"/>
<polygon points="317.0,572.9 334.6,572.9 326.9,587.9 324.7,587.9" fill="#e07408"/>
<text x="310.7" y="568.1" fill="#d06806" textLength="12.3" lengthAdjust="spacingAndGlyphs">M</text>
<text x="325.6" y="568.1" fill="#d06806">1</text>
<!-- M 1 -->
<polygon points="628.7,573.2 646.3,573.2 638.6,588.2 636.4,588.2" fill="#e07408"/>
<text x="622.7" y="568.1" fill="#d06806" textLength="12.3" lengthAdjust="spacingAndGlyphs">M</text>
<text x="639.0" y="568.1" fill="#d06806">2</text>
<!-- M 2 -->
<polygon points="940.5,573.0 958.1,573.0 950.4,588.0 948.2,588.0" fill="#e07408"/>
<text x="934.5" y="568.1" fill="#d06806" textLength="12.3" lengthAdjust="spacingAndGlyphs">M</text>
<text x="950.6" y="568.1" fill="#d06806">3</text>
<!-- M 3 -->
<polygon points="1044.4,574.6 1062.0,574.6 1054.3,589.6 1052.1,589.6" fill="#e07408"/>
<text x="1038.4" y="569.3" fill="#d06806" textLength="12.3" lengthAdjust="spacingAndGlyphs">M</text>
<text x="1054.3" y="569.3" fill="#d06806">4</text>
<!-- M 4 -->
<rect x="13.4" y="743.8" width="33.5" height="22.1" fill="#e2e2e2"/>
<text x="15.0" y="760.9" fill="#2c2c2c" letter-spacing="-0.12">Ch1</text>
<text x="64.0" y="760.9" fill="#d6d6d6" letter-spacing="-0.31">Start</text>
<text x="107.0" y="760.9" fill="#d6d6d6" letter-spacing="-0.28">10 MHz</text>
<text x="488.7" y="760.9" fill="#d6d6d6" letter-spacing="0.51">Pwr</text>
<text x="527.0" y="760.9" fill="#d6d6d6" letter-spacing="0.56">0 dBm</text>
<text x="956.4" y="760.9" fill="#d6d6d6" letter-spacing="0.03">Stop</text>
<text x="999.4" y="760.9" fill="#d6d6d6">20 GHz</text>
</svg></div>
<div class="abs" style="left:528px;top:34.5px;width:4px;height:366.5px;background:#faf9f1;"></div>
<div class="abs" style="left:1.3px;top:396.8px;width:530.7px;height:4.2px;background:#faf9f1;"></div>
<div class="abs" style="left:1064px;top:34.5px;width:3px;height:366.5px;background:#faf9f1;"></div>
<div class="abs" style="left:536.5px;top:396.8px;width:530.5px;height:4.2px;background:#faf9f1;"></div>
<div class="abs" style="left:1064px;top:405.1px;width:3px;height:367px;background:#faf9f1;"></div>
<div class="abs" style="left:1.3px;top:768.9px;width:1066px;height:3px;background:#faf9f1;"></div>
<div class="abs" style="left:0;top:772px;width:1067px;height:28px;background:linear-gradient(#f5f4ea 0%,#edebdc 55%,#e4e1cf 100%);"></div>
<div class="abs" style="left:713px;top:776px;width:1px;height:21px;background:#d2cfbf;"></div><div class="abs" style="left:714px;top:776px;width:1px;height:21px;background:#fff;"></div>
<div class="abs" style="left:750.5px;top:776px;width:1px;height:21px;background:#d2cfbf;"></div><div class="abs" style="left:751.5px;top:776px;width:1px;height:21px;background:#fff;"></div>
<div class="abs" style="left:925.5px;top:776px;width:1px;height:21px;background:#d2cfbf;"></div><div class="abs" style="left:926.5px;top:776px;width:1px;height:21px;background:#fff;"></div>
<div class="abs" style="left:982.8px;top:776px;width:1px;height:21px;background:#d2cfbf;"></div><div class="abs" style="left:983.8px;top:776px;width:1px;height:21px;background:#fff;"></div>
<div class="abs" style="left:1063.5px;top:776px;width:1px;height:21px;background:#d2cfbf;"></div><div class="abs" style="left:1064.5px;top:776px;width:1px;height:21px;background:#fff;"></div>
<div class="abs" style="left:780.3px;top:776px;width:121.5px;height:21px;box-sizing:border-box;border:1.3px solid #7a7a7a;border-radius:4.5px;background:#fff;overflow:hidden;">
<div class="abs" style="left:4px;top:3px;width:2.4px;height:12.5px;background:#3cd03c;"></div>
<div class="abs" style="left:14.3px;top:3px;width:8px;height:12.5px;background:linear-gradient(#7be07b,#2fc82f 50%,#7be07b);"></div>
<div class="abs" style="left:30.35px;top:3px;width:8px;height:12.5px;background:linear-gradient(#7be07b,#2fc82f 50%,#7be07b);"></div>
<div class="abs" style="left:46.4px;top:3px;width:8px;height:12.5px;background:linear-gradient(#7be07b,#2fc82f 50%,#7be07b);"></div>
<div class="abs" style="left:62.45px;top:3px;width:8px;height:12.5px;background:linear-gradient(#7be07b,#2fc82f 50%,#7be07b);"></div>
<div class="abs" style="left:78.5px;top:3px;width:8px;height:12.5px;background:linear-gradient(#7be07b,#2fc82f 50%,#7be07b);"></div>
<div class="abs" style="left:94.55px;top:3px;width:8px;height:12.5px;background:linear-gradient(#7be07b,#2fc82f 50%,#7be07b);"></div>
<div class="abs" style="left:110.6px;top:3px;width:8px;height:12.5px;background:linear-gradient(#7be07b,#2fc82f 50%,#7be07b);"></div>
<div class="abs" style="left:126.65px;top:3px;width:6px;height:12.5px;background:linear-gradient(#7be07b,#2fc82f 50%,#7be07b);"></div>
</div>
<svg width="1067" height="800" viewBox="0 0 1067 800" style="pointer-events:none">
<text x="989.6" y="794.6" fill="#1a1a1a" style="font-size:17.6px" letter-spacing="-0.62">LOCAL</text>
</svg>
</body></html>
